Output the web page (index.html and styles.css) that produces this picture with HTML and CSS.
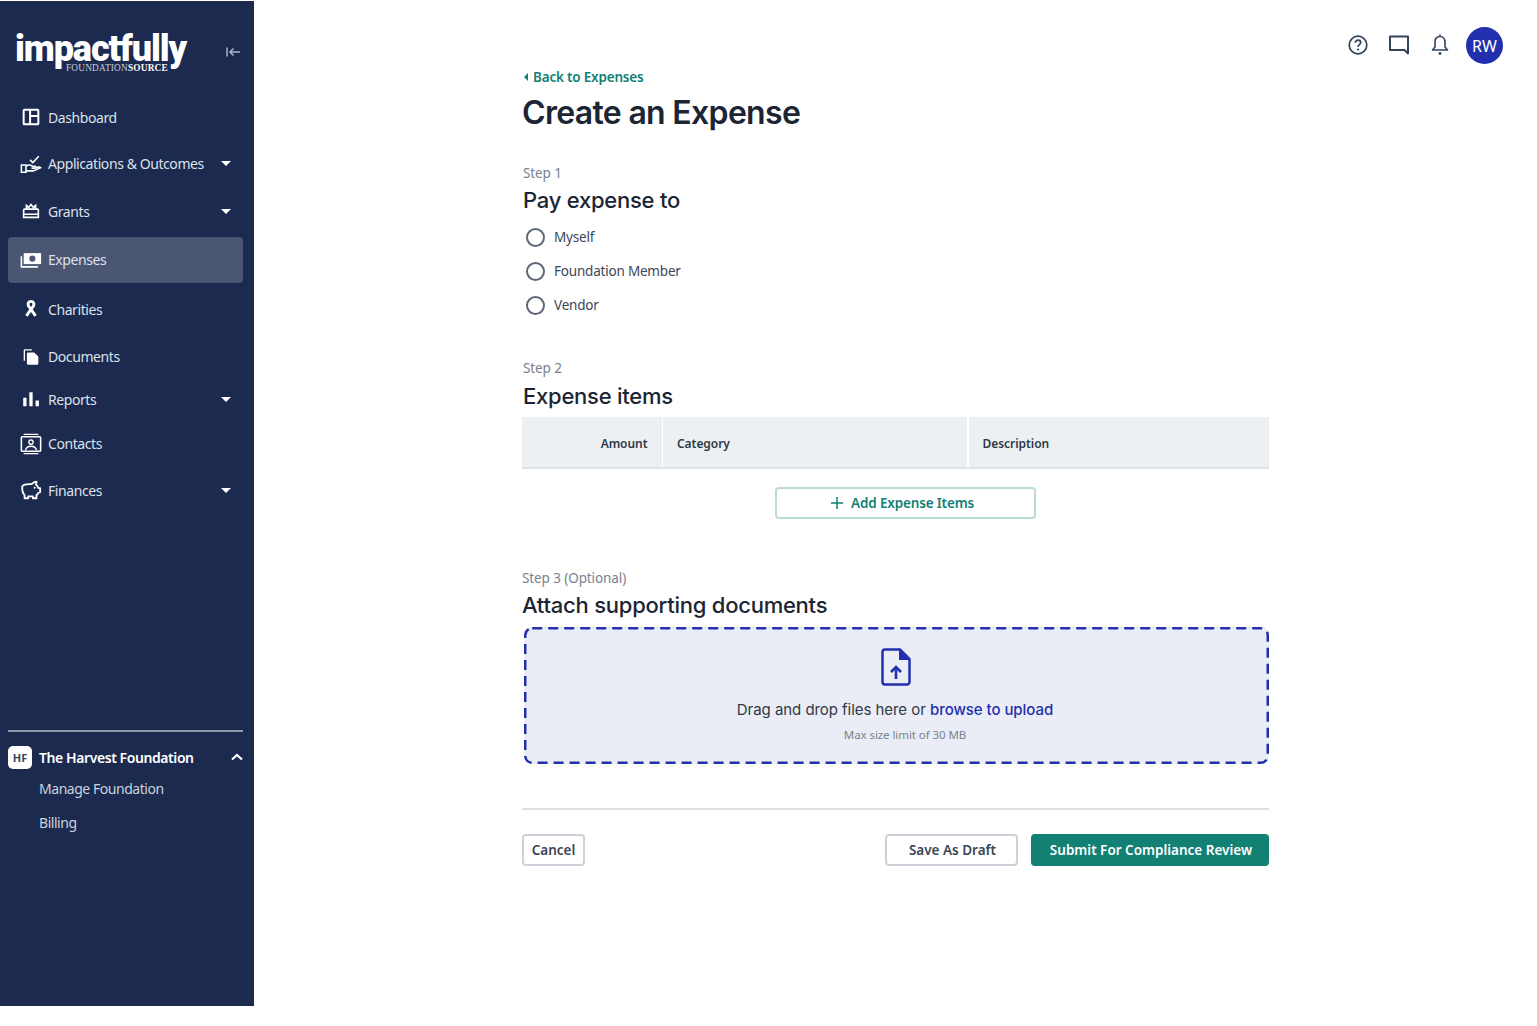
FILE: index.html
```html
<!DOCTYPE html>
<html lang="en">
<head>
<meta charset="utf-8">
<title>Create an Expense</title>
<link rel="stylesheet" href="styles.css">
</head>
<body>
<div class="app">
  <aside class="sidebar">
    <div class="brand">
      <div class="logo">
        <span class="logo-word">impactfully</span>
        <span class="logo-sub">FOUNDATION<b>SOURCE</b></span>
      </div>
      <svg class="collapse" viewBox="0 0 16 12" width="16" height="12"><path d="M2 1.500v9M15 6H5M8.500 2.500 5 6l3.500 3.500" fill="none" stroke="#aeb6c8" stroke-width="1.500"/></svg>
    </div>
    <nav class="nav">
      <a class="nav-item"><svg class="ico" viewBox="0 0 24 24"><path d="M5 4h14a1 1 0 0 1 1 1v14a1 1 0 0 1-1 1H5a1 1 0 0 1-1-1V5a1 1 0 0 1 1-1ZM11 4v16M11 11h9" fill="none" stroke="#fff" stroke-width="2.200"/></svg><span>Dashboard</span></a>
      <a class="nav-item"><svg class="ico" viewBox="0 0 24 24"><path d="m11 7.500 3 3 6.500-7" fill="none" stroke="#fff" stroke-width="1.700"/><path d="M1.500 13h5v8h-5ZM6.500 14.500c3-2 5-2 7 0h3c1 0 1 2 0 2h-4M6.500 19.500h8l8-3.500c-1-1.500-3-1-6 .5" fill="none" stroke="#fff" stroke-width="1.700"/></svg><span>Applications &amp; Outcomes</span><i class="caret"></i></a>
      <a class="nav-item"><svg class="ico" viewBox="0 0 24 24"><path d="M5 10h14a1 1 0 0 1 1 1v8H4v-8a1 1 0 0 1 1-1ZM4 15.500h16M7 10V6l2.500 2L12 5l2.500 3L17 6v4" fill="none" stroke="#fff" stroke-width="1.800"/></svg><span>Grants</span><i class="caret"></i></a>
      <a class="nav-item active"><svg class="ico" viewBox="0 0 24 24"><path d="M4 4.500h19v12H4Z" fill="#fff"/><circle cx="13.500" cy="10.500" r="3.300" fill="#4a5672"/><path d="M1.500 8v11.500h18" fill="none" stroke="#fff" stroke-width="1.700"/></svg><span>Expenses</span></a>
      <a class="nav-item"><svg class="ico" viewBox="0 0 24 24"><path d="M7 19.500 14.800 8.500c1-2.300-.2-4.800-2.800-4.800S8.200 6.200 9.200 8.500L17 19.500" fill="none" stroke="#fff" stroke-width="3.200"/></svg><span>Charities</span></a>
      <a class="nav-item"><svg class="ico" viewBox="0 0 24 24"><path d="M4 16V5a1.500 1.500 0 0 1 1.500-1.500H13v1.500H6c-.5 0-.5 0-.5.500v10.500Z" fill="#fff"/><path d="M9 7h6.500l4.500 4.500V19a1.500 1.500 0 0 1-1.500 1.500H9A1.500 1.500 0 0 1 7.500 19V8.500A1.500 1.500 0 0 1 9 7Z" fill="#fff"/></svg><span>Documents</span></a>
      <a class="nav-item"><svg class="ico" viewBox="0 0 24 24"><path d="M3.500 10.500h3.600V20H3.500ZM10.200 4.500h3.600V20h-3.600ZM17 13.500h3.600V20H17Z" fill="#fff"/></svg><span>Reports</span><i class="caret"></i></a>
      <a class="nav-item"><svg class="ico" viewBox="0 0 24 24"><path d="M4 1.500h16M4 22.500h16" fill="none" stroke="#fff" stroke-width="1.600"/><rect x="1.500" y="4" width="21" height="16" rx="1" fill="none" stroke="#fff" stroke-width="1.700"/><circle cx="12" cy="10" r="2.300" fill="none" stroke="#fff" stroke-width="1.500"/><path d="M6 19c.5-3.500 3-4.500 6-4.500s5.500 1 6 4.500" fill="none" stroke="#fff" stroke-width="1.500"/></svg><span>Contacts</span></a>
      <a class="nav-item"><svg class="ico" viewBox="0 0 24 24"><path d="M2.500 8c-.5 5 .5 7.500 2.500 9.500v3.500h4v-2h5v2h4v-3.500c1-.7 1.800-1.500 2.200-2.500l1.800-.7V10h-1.800c-.5-1.500-1.500-2.800-2.700-3.700l.5-3.300c-2.300 0-4 1-5.300 2.500H10C6 5.500 3 6.500 2.500 8Z" fill="none" stroke="#fff" stroke-width="2" stroke-linejoin="round"/><circle cx="16" cy="9.500" r="1.100" fill="#fff"/></svg><span>Finances</span><i class="caret"></i></a>
    </nav>
    <div class="foundation">
      <div class="foundation-head">
        <span class="badge">HF</span>
        <strong>The Harvest Foundation</strong>
        <svg class="chev" viewBox="0 0 12 8" width="12" height="8"><path d="M1 6.500 6 2l5 4.500" fill="none" stroke="#fff" stroke-width="2.200"/></svg>
      </div>
      <a class="sub-link">Manage Foundation</a>
      <a class="sub-link">Billing</a>
    </div>
  </aside>

  <main class="main">
    <header class="topbar">
      <svg class="top-ico" viewBox="0 0 24 24"><circle cx="12" cy="12" r="8.800" fill="none" stroke="#33445f" stroke-width="1.700"/><path d="M9.300 9.700c0-1.500 1.200-2.500 2.700-2.500s2.700 1 2.700 2.400c0 2.100-2.700 2.100-2.700 4.300" fill="none" stroke="#33445f" stroke-width="1.700"/><circle cx="12" cy="16.500" r="1.100" fill="#33445f"/></svg>
      <svg class="top-ico" viewBox="0 0 24 24"><path d="M3 3.500h18v17l-3.500-3.500H3Z" fill="none" stroke="#33445f" stroke-width="2" stroke-linejoin="round"/></svg>
      <svg class="top-ico" viewBox="0 0 24 24"><path d="M12 3.500c-3 0-5 2.200-5 5.500v5l-2.500 3h15L17 14V9c0-3.300-2-5.500-5-5.500Z" fill="none" stroke="#33445f" stroke-width="1.600" stroke-linejoin="round"/><circle cx="12" cy="20.500" r="1.400" fill="#33445f"/><path d="M12 1.500v2" stroke="#33445f" stroke-width="1.600"/></svg>
      <span class="avatar">RW</span>
    </header>

    <div class="content">
      <a class="back"><i class="back-caret"></i>Back to Expenses</a>
      <h1>Create an Expense</h1>

      <section class="step-one">
        <p class="step">Step 1</p>
        <h2>Pay expense to</h2>
        <div class="radios">
          <label class="radio"><i></i>Myself</label>
          <label class="radio"><i></i>Foundation Member</label>
          <label class="radio"><i></i>Vendor</label>
        </div>
      </section>

      <section class="step-two">
        <p class="step">Step 2</p>
        <h2>Expense items</h2>
        <div class="table">
          <div class="cell amount">Amount</div>
          <div class="cell">Category</div>
          <div class="cell">Description</div>
        </div>
        <div class="add-row">
          <button class="btn add"><svg viewBox="0 0 12 12" width="12" height="12"><path d="M6 0v12M0 6h12" stroke="#128073" stroke-width="1.500"/></svg>Add Expense Items</button>
        </div>
      </section>

      <section class="step-three">
        <p class="step">Step 3 (Optional)</p>
        <h2>Attach supporting documents</h2>
        <div class="drop">
          <svg class="dash" aria-hidden="true"><rect x="1.250" y="1.250" rx="7" class="dash-rect"/></svg>
          <svg class="file" viewBox="0 0 30 38" width="30" height="38"><path d="M3.500 1.500H19L28.500 11v23a2.500 2.500 0 0 1-2.500 2.500H4A2.500 2.500 0 0 1 1.500 34V4A2.500 2.500 0 0 1 3.500 1.500Z" fill="none" stroke="#2230ae" stroke-width="2.500"/><path d="M18 1.500 28.500 12H18Z" fill="#2230ae"/><path d="M15 31V19M10 24l5-5 5 5" fill="none" stroke="#2230ae" stroke-width="2.600"/></svg>
          <p class="drop-text">Drag and drop files here or <a>browse to upload</a></p>
          <p class="drop-note">Max size limit of 30 MB</p>
        </div>
      </section>

      <footer class="actions">
        <button class="btn ghost">Cancel</button>
        <div class="actions-right">
          <button class="btn ghost draft">Save As Draft</button>
          <button class="btn primary">Submit For Compliance Review</button>
        </div>
      </footer>
    </div>
  </main>
</div>
</body>
</html>
```
FILE: styles.css
```css
* { box-sizing: border-box; }
html, body { margin: 0; height: 100%; background: #fff; overflow: hidden; }
body { padding-top: 1px; font-family: "Noto Sans", "Open Sans", sans-serif; color: #1b2533; }
p, h1, h2 { margin: 0; }
.app { display: flex; height: 1005px; }

/* Sidebar */
.sidebar { width: 254px; flex: none; background: #1b2a4e; display: flex; flex-direction: column; }
.brand { height: 93px; display: flex; align-items: flex-start; padding: 27px 12px 0 15px; justify-content: space-between; }
.logo { width: 176px; display: flex; flex-direction: column; align-items: stretch; }
.logo-word { font-family: Roboto, sans-serif; font-weight: 900; font-size: 36px; line-height: 42px; letter-spacing: -1.100px; color: #fff; white-space: nowrap; }
.logo-sub { font-family: "Liberation Serif", serif; font-size: 9.300px; line-height: 9px; color: #c8cedb; margin: -6px 0 0 51px; letter-spacing: .2px; white-space: nowrap; }
.logo-sub b { color: #fff; }
.collapse { margin-top: 18px; margin-right: 1px; }
.nav { display: grid; grid-template-rows: 46px 47px 48px 49px 50.500px 44px 41.500px 47.500px 45px; }
.nav-item { margin: 0 11px 0 8px; height: 40px; align-self: center; display: flex; align-items: center; padding: 0 12px; border-radius: 4px; gap: 6px; font-size: 14px; letter-spacing: -.42px; color: #dde1ea; }
.nav-item.active { height: 46px; background: #4a5672; }
.ico { width: 22px; height: 22px; flex: none; }
.caret { margin-left: auto; width: 0; height: 0; border: 5px solid transparent; border-top: 5px solid #fff; border-bottom: 0; }
.foundation { margin: 217px 11px 0 8px; border-top: 2px solid #8f97a9; padding-top: 13.500px; }
.foundation-head { display: flex; align-items: center; height: 24px; gap: 7px; color: #fff; font-size: 14px; letter-spacing: -.42px; }
.foundation-head strong { font-weight: 600; }
.badge { width: 24px; height: 23px; flex: none; border-radius: 5px; background: #fff; color: #33445f; font-size: 11px; font-weight: 700; letter-spacing: 0; display: flex; align-items: center; justify-content: center; }
.chev { margin-left: auto; }
.sub-link { display: block; margin-left: 31px; height: 34px; line-height: 34px; font-size: 14px; letter-spacing: -.46px; color: #ccd2df; }
.foundation-head + .sub-link { margin-top: 3px; }

/* Main */
.main { flex: 1; min-width: 0; }
.topbar { height: 63px; padding: 26px 34px 0 0; display: flex; justify-content: flex-end; align-items: center; }
.top-ico { width: 24px; height: 24px; margin: 0 17px 2px 0; }
.top-ico:nth-child(3) { margin-right: 14px; }
.avatar { width: 37px; height: 37px; border-radius: 50%; background: #2230ae; color: #fff; font-size: 16px; display: flex; align-items: center; justify-content: center; }
.content { width: 747px; margin: 0 auto; }
.back { display: flex; align-items: center; gap: 5px; margin-top: 3px; height: 20px; font-size: 13.500px; font-weight: 600; letter-spacing: -.2px; color: #128073; padding-left: 2px; }
.back-caret { width: 0; height: 0; border: 4px solid transparent; border-right: 4px solid #128073; border-left: 0; }
h1 { margin-top: 6px; font: 600 32px/40px Inter, sans-serif; letter-spacing: -.68px; color: #1b2533; }
h2 { font: 500 22px/30px Inter, sans-serif; letter-spacing: -.24px; color: #1b2533; }
.step { height: 20px; font-size: 13.500px; line-height: 20px; color: #7a8290; letter-spacing: -.1px; }
.step-one { margin-top: 30px; padding-left: 1px; }
.step-one h2, .step-two h2, .step-three h2 { margin-top: 2px; }
.step-two h2 { margin-top: 3px; }
.radios { margin-top: 5px; }
.radio { height: 34px; display: flex; align-items: center; gap: 9px; padding-left: 3px; font-size: 13.500px; letter-spacing: -.2px; color: #3c4656; }
.radio i { width: 19px; height: 19px; border: 2px solid #5d6675; border-radius: 50%; }
.step-two { margin-top: 36px; }
.step-two > .step, .step-two > h2 { padding-left: 1px; }
.table { margin-top: 6px; height: 52px; display: grid; grid-template-columns: 139.500px 304px 1fr; gap: 1.500px; background: #fff; border-bottom: 2px solid #dfe3e6; }
.cell { background: #edf0f2; display: flex; align-items: center; padding: 2px 14px 0; font-size: 12px; font-weight: 600; color: #2f3947; letter-spacing: -.05px; }
.cell.amount { justify-content: flex-end; }
.add-row { margin-top: 18px; display: flex; justify-content: center; padding-left: 20px; }
.btn { height: 32px; border-radius: 4px; font-family: "Noto Sans", sans-serif; font-size: 13.500px; font-weight: 600; display: inline-flex; align-items: center; justify-content: center; background: #fff; }
.add { width: 261px; gap: 8px; padding-right: 12px; border: 2px solid #bcdcd7; color: #128073; letter-spacing: -.16px; }
.step-three { margin-top: 49px; }
.step-three h2 { margin-bottom: 7px; }
.drop { position: relative; margin-left: 2px; height: 137px; border-radius: 8px; background: #eaedf5; display: flex; flex-direction: column; align-items: center; padding-top: 21px; }
.dash { position: absolute; inset: 0; width: 100%; height: 100%; pointer-events: none; }
.dash-rect { width: calc(100% - 2.500px); height: calc(100% - 2.500px); fill: none; stroke: #2230ae; stroke-width: 2.500; stroke-dasharray: 10 6; }
.file { display: block; margin-left: -1px; }
.drop-text { margin-top: 12px; margin-left: -3px; font-family: Inter, sans-serif; font-size: 15px; line-height: 24px; color: #2f3947; letter-spacing: -.05px; }
.drop-text a { color: #2230ae; font-weight: 500; }
.drop-note { margin-top: 4px; margin-left: 17px; font-size: 11.500px; line-height: 18px; color: #7a8290; letter-spacing: -.07px; }
.actions { margin-top: 44px; padding-top: 24px; border-top: 2px solid #dcdfe3; display: flex; justify-content: space-between; }
.actions-right { display: flex; gap: 13px; }
.ghost { width: 63px; border: 2px solid #cdd1d9; color: #3c4656; }
.draft { width: 133px; padding-left: 8px; }
.primary { width: 238px; border: 0; background: #128073; color: #fff; padding-left: 8px; }
```
